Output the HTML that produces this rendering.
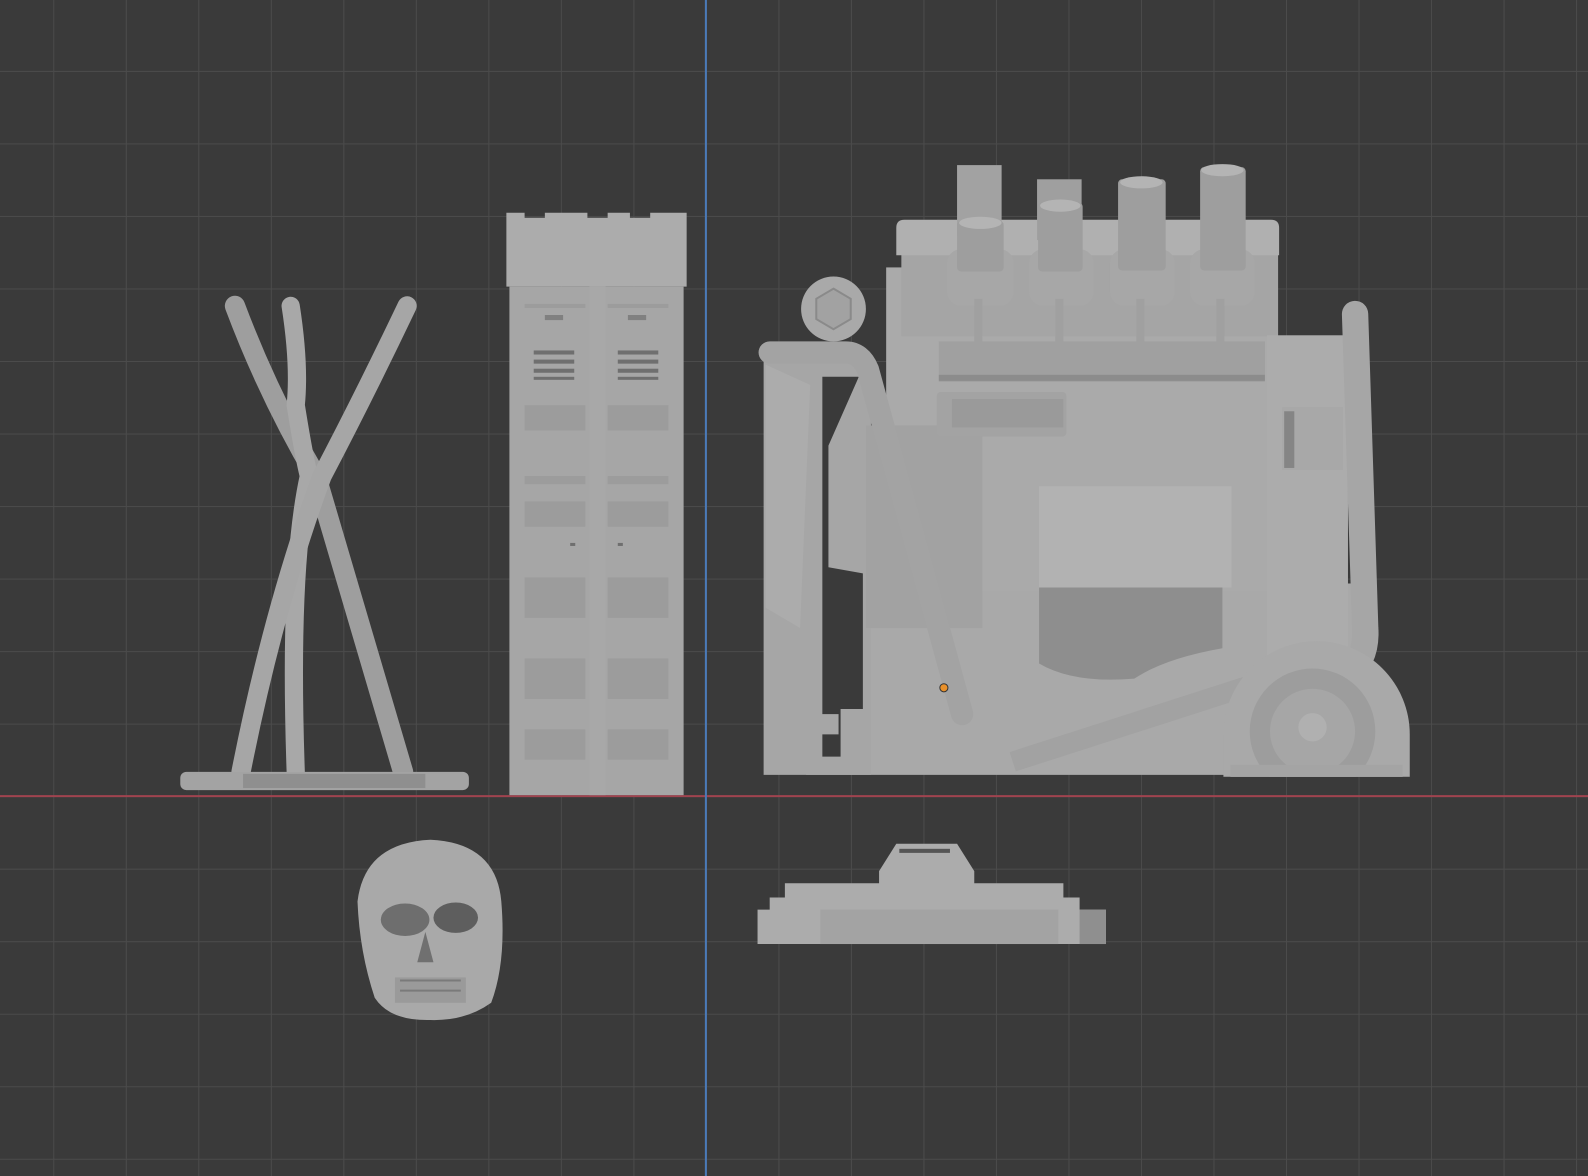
<!DOCTYPE html>
<html><head><meta charset="utf-8"><style>
html,body{margin:0;padding:0;background:#3a3a3a;overflow:hidden}
svg{display:block}
</style></head><body>
<svg width="1588" height="1176" viewBox="0 0 1568 1161" preserveAspectRatio="none" xmlns="http://www.w3.org/2000/svg">
<defs>
<pattern id="g" x="697" y="786" width="71.6" height="71.6" patternUnits="userSpaceOnUse">
<path d="M0 0H71.6M0 0V71.6" stroke="#4b4b4b" stroke-width="2" fill="none"/>
</pattern>
<clipPath id="wc"><rect x="1150" y="600" width="300" height="167"/></clipPath>
</defs>
<rect width="1568" height="1161" fill="#3a3a3a"/>
<rect width="1568" height="1161" fill="url(#g)"/>
<line x1="0" y1="786" x2="1568" y2="786" stroke="#a0434f" stroke-width="2"/>
<line x1="697" y1="0" x2="697" y2="1161" stroke="#4a7ab8" stroke-width="2"/>

<!-- sticks -->
<g stroke-linecap="round" fill="none">
<path d="M232 302 Q265 390 312 470 Q350 600 398 762" stroke="#9e9e9e" stroke-width="20"/>
<path d="M287 302 Q296 360 292 400 Q300 450 305 470 Q285 560 292 762" stroke="#a8a8a8" stroke-width="18"/>
<path d="M402 302 Q360 390 318 470 Q270 600 238 762" stroke="#a6a6a6" stroke-width="19"/>
</g>
<rect x="178" y="762" width="285" height="18" rx="6" fill="#a3a3a3"/>
<rect x="240" y="764" width="180" height="14" fill="#8f8f8f"/>

<!-- tower -->
<path d="M500 210 H518 V215 H538 V210 H580 V215 H600 V210 H622 V215 H642 V210 H678 V283 H500Z" fill="#acacac"/>
<rect x="503" y="283" width="172" height="502" fill="#a6a6a6"/>
<line x1="590" y1="283" x2="590" y2="785" stroke="#a8a8a8" stroke-width="16"/>
<g fill="#9c9c9c">
<rect x="518" y="300" width="60" height="4"/><rect x="600" y="300" width="60" height="4"/>
<rect x="538" y="311" width="18" height="5" fill="#808080"/><rect x="620" y="311" width="18" height="5" fill="#808080"/>
<rect x="518" y="400" width="60" height="25"/><rect x="600" y="400" width="60" height="25"/>
<rect x="518" y="470" width="60" height="8"/><rect x="600" y="470" width="60" height="8"/>
<rect x="518" y="495" width="60" height="25"/><rect x="600" y="495" width="60" height="25"/>
<rect x="518" y="570" width="60" height="40"/><rect x="600" y="570" width="60" height="40"/>
<rect x="518" y="650" width="60" height="40"/><rect x="600" y="650" width="60" height="40"/>
<rect x="518" y="720" width="60" height="30"/><rect x="600" y="720" width="60" height="30"/>
</g>
<g fill="#6f6f6f">
<rect x="527" y="346" width="40" height="4"/><rect x="527" y="355" width="40" height="4"/><rect x="527" y="364" width="40" height="4"/><rect x="527" y="372" width="40" height="3"/>
<rect x="610" y="346" width="40" height="4"/><rect x="610" y="355" width="40" height="4"/><rect x="610" y="364" width="40" height="4"/><rect x="610" y="372" width="40" height="3"/>
<rect x="563" y="536" width="5" height="3"/><rect x="610" y="536" width="5" height="3"/>
</g>

<!-- engine -->
<path d="M796 720 H830 V576 H1340 V765 H1110 L1095 765 H796Z" fill="#a9a9a9"/>
<path d="M754 356 H860 V765 H754Z" fill="#a6a6a6"/>
<path d="M756 360 L800 380 L790 620 L756 600Z" fill="#acacac"/>
<!-- dark gaps -->
<path d="M812 372 H848 L818 440 V560 L852 566 V700 H830 V747 H812Z" fill="#3a3a3a"/>
<rect x="798" y="705" width="30" height="20" fill="#a6a6a6"/>
<!-- block -->
<rect x="875" y="264" width="380" height="320" fill="#aaaaaa"/>
<rect x="890" y="232" width="372" height="100" fill="#a5a5a5"/>
<path d="M885 225 Q885 217 893 217 H1255 Q1263 217 1263 225 V252 H885Z" fill="#b0b0b0"/>
<rect x="855" y="420" width="115" height="200" fill="#a2a2a2"/>
<rect x="1026" y="480" width="190" height="100" fill="#b2b2b2"/>
<path d="M1026 580 H1207 V640 Q1150 650 1120 670 Q1060 675 1026 655Z" fill="#8e8e8e"/>
<rect x="1251" y="331" width="80" height="316" fill="#acacac"/>
<rect x="1266" y="402" width="60" height="62" fill="#a8a8a8"/>
<rect x="1268" y="406" width="10" height="56" fill="#858585"/>
<rect x="927" y="337" width="322" height="40" fill="#a0a0a0"/>
<rect x="927" y="370" width="322" height="6" fill="#8c8c8c"/>
<rect x="925" y="387" width="128" height="44" rx="4" fill="#a3a3a3"/>
<rect x="940" y="394" width="110" height="28" fill="#9a9a9a"/>
<rect x="945" y="163" width="44" height="70" fill="#a2a2a2"/>
<rect x="1024" y="177" width="44" height="60" fill="#9f9f9f"/>
<g fill="#a7a7a7">
<rect x="935" y="246" width="66" height="56" rx="14"/>
<rect x="1016" y="246" width="64" height="56" rx="14"/>
<rect x="1096" y="246" width="64" height="56" rx="14"/>
<rect x="1175" y="246" width="64" height="56" rx="14"/>
</g>
<g fill="#9e9e9e">
<rect x="945" y="218" width="46" height="50" rx="4"/>
<rect x="1025" y="200" width="44" height="68" rx="4"/>
<rect x="1104" y="177" width="47" height="90" rx="4"/>
<rect x="1185" y="165" width="45" height="102" rx="4"/>
</g>
<g fill="#b4b4b4">
<ellipse cx="968" cy="220" rx="21" ry="6"/><ellipse cx="1047" cy="203" rx="20" ry="6"/>
<ellipse cx="1127" cy="180" rx="21" ry="6"/><ellipse cx="1207" cy="168" rx="21" ry="6"/>
</g>
<g fill="#a0a0a0">
<rect x="962" y="295" width="8" height="62"/><rect x="1042" y="295" width="8" height="62"/>
<rect x="1122" y="295" width="8" height="62"/><rect x="1201" y="295" width="8" height="62"/>
</g>
<circle cx="823" cy="305" r="32" fill="#a9a9a9"/>
<polygon points="823,285 840,295 840,315 823,325 806,315 806,295" fill="#a2a2a2" stroke="#8a8a8a" stroke-width="2"/>
<path d="M760 348 H835 Q850 348 857 365 L950 705" stroke="#a3a3a3" stroke-width="22" fill="none" stroke-linecap="round"/>
<path d="M1000 752 L1230 678" stroke="#a2a2a2" stroke-width="20" fill="none"/>
<path d="M1338 310 L1348 620 Q1350 650 1330 665" stroke="#a6a6a6" stroke-width="26" fill="none" stroke-linecap="round"/>
<g clip-path="url(#wc)">
<path d="M1208 767 V725 A92 92 0 0 1 1392 725 V767Z" fill="#a9a9a9"/>
<circle cx="1296" cy="722" r="62" fill="#9d9d9d"/>
<circle cx="1296" cy="722" r="42" fill="#a6a6a6"/>
<circle cx="1296" cy="718" r="14" fill="#b0b0b0"/>
</g>
<rect x="1215" y="755" width="170" height="12" fill="#a4a4a4"/>
<circle cx="932" cy="679" r="4" fill="#e8902a" stroke="#333" stroke-width="1"/>

<!-- skull -->
<path d="M425 829 Q490 832 495 890 Q500 950 485 990 Q460 1008 425 1007 Q385 1008 370 985 Q355 940 353 890 Q360 832 425 829Z" fill="#a9a9a9"/>
<ellipse cx="400" cy="908" rx="24" ry="16" fill="#6e6e6e"/>
<ellipse cx="450" cy="906" rx="22" ry="15" fill="#5e5e5e"/>
<path d="M420 920 L428 950 L412 950Z" fill="#707070"/>
<rect x="390" y="965" width="70" height="25" fill="#9a9a9a"/>
<path d="M395 968 H455 M395 978 H455" stroke="#7a7a7a" stroke-width="2"/>

<!-- bottom object -->
<path d="M748 898 H760 V886 H775 V872 H868 V860 L885 833 H945 L962 860 V872 H1050 V886 H1066 V898 H1092 V932 H748Z" fill="#acacac"/>
<rect x="888" y="838" width="50" height="4" fill="#555"/>
<rect x="810" y="898" width="235" height="34" fill="#a3a3a3"/>
<rect x="1066" y="898" width="26" height="34" fill="#8f8f8f"/>
</svg>
</body></html>
